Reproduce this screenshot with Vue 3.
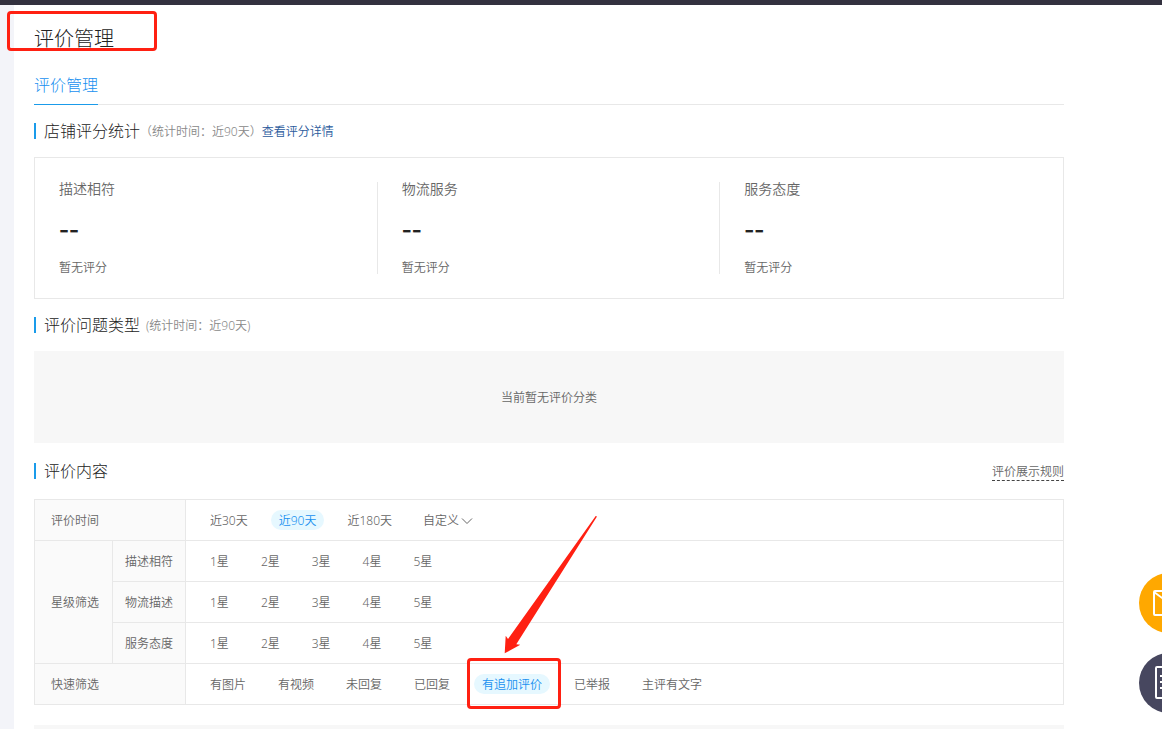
<script setup>
import { ref } from 'vue'

const scores = ['描述相符', '物流服务', '服务态度']
const periods = ['近30天', '近90天', '近180天']
const starRows = ['描述相符', '物流描述', '服务态度']
const stars = ['1星', '2星', '3星', '4星', '5星']
const quickFilters = ['有图片', '有视频', '未回复', '已回复', '有追加评价', '已举报', '主评有文字']

const period = ref('近90天')
const quick = ref('有追加评价')
</script>

<template>
  <div class="app">
    <header class="topbar"></header>
    <main class="page">
      <h1 class="title">评价管理<span class="mark title-mark"></span></h1>

      <nav class="tabs"><a href="#" class="tab">评价管理</a></nav>

      <div class="section-head">
        <h2>店铺评分统计</h2>
        <span class="note wide">（统计时间：近90天）</span>
        <a href="#" class="detail">查看评分详情</a>
      </div>
      <section class="scores">
        <div v-for="s in scores" :key="s" class="score">
          <div class="score-name">{{ s }}</div>
          <div class="score-value">--</div>
          <div class="score-tip">暂无评分</div>
        </div>
      </section>

      <div class="section-head">
        <h2>评价问题类型</h2>
        <span class="note">(统计时间：近90天)</span>
      </div>
      <section class="empty">当前暂无评价分类</section>

      <div class="section-head">
        <h2>评价内容</h2>
        <a href="#" class="rules">评价展示规则</a>
      </div>
      <table class="filters">
        <colgroup>
          <col class="col-group" />
          <col class="col-name" />
          <col />
        </colgroup>
        <tbody>
          <tr>
            <th colspan="2" scope="row">评价时间</th>
            <td>
              <div class="options periods">
                <button v-for="p in periods" :key="p" type="button" class="pill" :class="{ active: p === period }" @click="period = p">{{ p }}</button>
                <button type="button" class="pill">
                  自定义<svg class="chevron" width="12" height="8" viewBox="0 0 12 8"><path d="M1 1.5 6 6.5 11 1.5" fill="none" stroke="currentColor" /></svg>
                </button>
              </div>
            </td>
          </tr>
          <tr v-for="(row, i) in starRows" :key="row">
            <th v-if="i === 0" rowspan="3" scope="rowgroup">星级筛选</th>
            <th scope="row" class="sub">{{ row }}</th>
            <td>
              <div class="options">
                <button v-for="s in stars" :key="s" type="button" class="pill">{{ s }}</button>
              </div>
            </td>
          </tr>
          <tr>
            <th colspan="2" scope="row">快速筛选</th>
            <td>
              <div class="options">
                <button v-for="q in quickFilters" :key="q" type="button" class="pill" :class="{ active: q === quick }" @click="quick = q">
                  {{ q }}<span v-if="q === '有追加评价'" class="mark quick-mark"></span>
                  <svg v-if="q === '有追加评价'" class="arrow" width="96" height="140" viewBox="0 0 96 140">
                    <path d="M.7 138.3 1.7 120.7 4 124 91.7 1 93 1.6 12.3 129.3 16.3 129.7Z" fill="#ff2012" />
                  </svg>
                </button>
              </div>
            </td>
          </tr>
        </tbody>
      </table>
      <section class="results"></section>
    </main>

    <aside class="floating">
      <button type="button" class="float mail" aria-label="消息">
        <svg width="32" height="26" viewBox="0 0 32 26" fill="none" stroke="#fff" stroke-width="2" stroke-linejoin="round">
          <rect x="1" y="1" width="30" height="24" rx="1" />
          <path d="M1 2 16 13 31 2" />
        </svg>
      </button>
      <button type="button" class="float notes" aria-label="反馈">
        <svg width="28" height="34" viewBox="0 0 28 34" fill="none" stroke="#fff" stroke-width="2" stroke-linejoin="round">
          <rect x="1" y="1" width="26" height="31" rx="1" />
          <path d="M5 10H20M5 16H20M5 22H20" />
        </svg>
      </button>
    </aside>
  </div>
</template>

<style>
body {
  margin: 0;
}
</style>

<style scoped>
.app {
  box-sizing: border-box;
  height: 100vh;
  overflow: hidden;
  display: flex;
  flex-direction: column;
  position: relative;
  background: #f3f4f9;
  color: #666;
  font: 350 12px/20px "Noto Sans", "Noto Sans CJK SC", sans-serif;
}
.topbar {
  flex: none;
  height: 5px;
  background: #33313f;
}
.page {
  flex: 1;
  display: flex;
  flex-direction: column;
  margin-left: 14px;
  padding: 18px 98px 0 20px;
  background: #fff;
}
.title {
  position: relative;
  margin: 0;
  font-size: 20px;
  font-weight: 300;
  line-height: 32px;
  color: #222;
}
.mark {
  position: absolute;
  box-sizing: border-box;
  border: 3px solid #ff2012;
  border-radius: 4px;
  pointer-events: none;
}
.title-mark {
  left: -27px;
  top: -12px;
  width: 150px;
  height: 40px;
}
.tabs {
  display: flex;
  margin-top: 11px;
  border-bottom: 1px solid #e8e8e8;
}
.tab {
  margin-bottom: -1px;
  border-bottom: 1px solid #1a9bea;
  color: #1890f0;
  font-size: 16px;
  font-weight: 300;
  line-height: 38px;
  text-decoration: none;
}
.section-head {
  display: flex;
  align-items: center;
  height: 16px;
  margin: 18px 0;
  border-left: 2px solid #1a9bea;
  padding-left: 8px;
}
.section-head h2 {
  margin: 0;
  font-size: 16px;
  font-weight: 300;
  line-height: 16px;
  color: #222;
}
.note {
  margin-left: 6px;
  padding-top: 2px;
  color: #888;
}
.note.wide {
  margin-left: 0;
}
.detail {
  padding-top: 2px;
  color: #2a5a9c;
  text-decoration: none;
}
.scores {
  display: grid;
  grid-template-columns: repeat(3, 1fr);
  padding: 24px 0;
  border: 1px solid #e8e8e8;
}
.score {
  height: 92px;
  padding-left: 24px;
}
.score + .score {
  border-left: 1px solid #e8e8e8;
  margin-left: -1px;
}
.score-name {
  font-size: 14px;
  line-height: 14px;
}
.score-value {
  margin: 15px 0;
  font-size: 28px;
  font-weight: 500;
  line-height: 32px;
  font-family: "Noto Sans CJK SC", sans-serif;
  color: #222;
}
.empty {
  padding-top: 2px;
  background: #f7f7f7;
  line-height: 90px;
  text-align: center;
}
.empty + .section-head {
  margin: 20px 0;
}
.rules {
  margin-left: auto;
  padding-top: 2px;
  border-bottom: 1px dashed #444;
  color: #666;
  line-height: 16px;
  text-decoration: none;
}
.filters {
  width: 100%;
  border-collapse: collapse;
  table-layout: fixed;
}
.col-group {
  width: 78px;
}
.col-name {
  width: 73px;
}
.filters th,
.filters td {
  height: 40px;
  padding: 0 16px;
  border: 1px solid #e8e8e8;
  font-weight: 350;
  text-align: left;
}
.filters th {
  height: 38px;
  padding-top: 2px;
  background: #fafafa;
  white-space: nowrap;
}
.filters .sub {
  padding: 2px 12px 0;
}
.options {
  display: flex;
  gap: 16px;
}
.periods {
  gap: 15px;
}
.pill {
  position: relative;
  display: flex;
  align-items: center;
  gap: 2px;
  padding: 2px 8px 0;
  border: 0;
  border-radius: 10px;
  background: none;
  color: #666;
  font: inherit;
  line-height: 18px;
  white-space: nowrap;
  cursor: pointer;
}
.pill.active {
  background: #e6f8ff;
  color: #1890f0;
}
.quick-mark {
  left: -7px;
  top: -16px;
  width: 94px;
  height: 51px;
}
.arrow {
  position: absolute;
  left: 30px;
  top: -159px;
  pointer-events: none;
}
.results {
  flex: 1;
  margin-top: 20px;
  background: #f7f7f7;
}
.floating {
  position: absolute;
  right: -37px;
  bottom: 16px;
  display: grid;
  gap: 20px;
}
.float {
  display: grid;
  place-items: center;
  width: 60px;
  height: 60px;
  padding: 0;
  border: 0;
  border-radius: 50%;
  cursor: pointer;
}
.mail {
  background: #ffa800;
}
.notes {
  background: #47475f;
}
</style>
